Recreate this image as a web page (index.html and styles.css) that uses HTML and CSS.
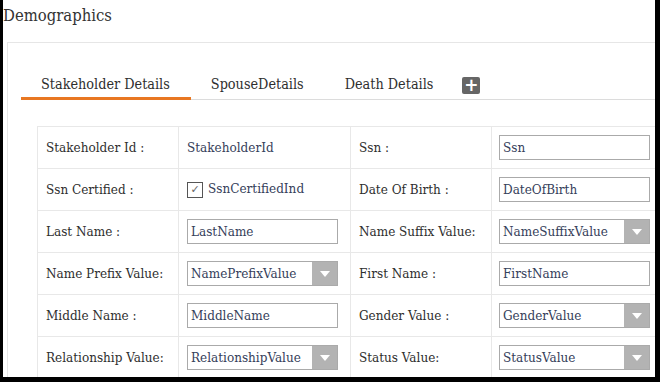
FILE: index.html
```html
<!DOCTYPE html>
<html lang="en">
<head>
    <meta charset="UTF-8">
    <title>Demographics</title>
    <link rel="stylesheet" href="styles.css">
</head>
<body>
    <div class="page">
        <h1 class="title">Demographics</h1>
        <div class="panel">
            <ul class="tabs">
                <li class="tab active">Stakeholder Details</li>
                <li class="tab">SpouseDetails</li>
                <li class="tab">Death Details</li>
                <li class="tab-add"><span class="plus">+</span></li>
            </ul>
            <table class="details">
                <tr>
                    <td class="lbl">Stakeholder Id :</td>
                    <td class="val"><span class="plain">StakeholderId</span></td>
                    <td class="lbl">Ssn :</td>
                    <td class="val"><div class="field">Ssn</div></td>
                </tr>
                <tr>
                    <td class="lbl">Ssn Certified :</td>
                    <td class="val"><span class="check">&#10003;</span><span class="plain">SsnCertifiedInd</span></td>
                    <td class="lbl">Date Of Birth :</td>
                    <td class="val"><div class="field">DateOfBirth</div></td>
                </tr>
                <tr>
                    <td class="lbl">Last Name :</td>
                    <td class="val"><div class="field">LastName</div></td>
                    <td class="lbl">Name Suffix Value:</td>
                    <td class="val"><div class="field select">NameSuffixValue<span class="arrow"></span></div></td>
                </tr>
                <tr>
                    <td class="lbl">Name Prefix Value:</td>
                    <td class="val"><div class="field select">NamePrefixValue<span class="arrow"></span></div></td>
                    <td class="lbl">First Name :</td>
                    <td class="val"><div class="field">FirstName</div></td>
                </tr>
                <tr>
                    <td class="lbl">Middle Name :</td>
                    <td class="val"><div class="field">MiddleName</div></td>
                    <td class="lbl">Gender Value :</td>
                    <td class="val"><div class="field select">GenderValue<span class="arrow"></span></div></td>
                </tr>
                <tr>
                    <td class="lbl">Relationship Value:</td>
                    <td class="val"><div class="field select">RelationshipValue<span class="arrow"></span></div></td>
                    <td class="lbl">Status Value:</td>
                    <td class="val"><div class="field select">StatusValue<span class="arrow"></span></div></td>
                </tr>
            </table>
        </div>
    </div>
</body>
</html>
```

FILE: styles.css
```css
* { box-sizing: border-box; margin: 0; padding: 0; }
body {
    background: #000;
    padding: 0 5px 5px 3px;
    font-family: "DejaVu Serif Condensed", "DejaVu Serif", serif;
    color: #333;
}
.page {
    background: #fff;
    height: 377px;
    overflow: hidden;
}
.title {
    font-size: 16.5px;
    font-weight: 400;
    line-height: 20px;
    padding-top: 6px;
    height: 42px;
    color: #333;
}
.panel {
    margin-left: 4px;
    border-top: 1px solid #e6e6e6;
    border-left: 1px solid #e6e6e6;
    padding: 31px 0 0 13px;
    width: 700px;
}
.tabs {
    list-style: none;
    display: flex;
    align-items: flex-end;
    border-bottom: 1px solid #dcdcdc;
    height: 26px;
}
.tab {
    font-size: 14.3px;
    padding: 0 21px 3px 20px;
    height: 26px;
    line-height: 22px;
    color: #2e2e2e;
}
.tab.active {
    border-bottom: 3px solid #e87722;
    margin-bottom: -1px;
    height: 27px;
}
.tab-add {
    align-self: flex-start;
    margin: 3px 0 0 8px;
}
.plus {
    display: block;
    width: 18px;
    height: 17px;
    background: #666;
    color: #fff;
    border-radius: 2px;
    font-family: "DejaVu Sans", sans-serif;
    font-weight: 700;
    font-size: 17px;
    line-height: 17px;
    text-align: center;
}
.details {
    margin: 26px 0 0 16px;
    border-collapse: collapse;
    font-size: 13.4px;
}
.details td {
    border: 1px solid #e8e8e8;
    height: 42px;
    vertical-align: middle;
}
.lbl {
    width: 141px;
    padding-left: 8px;
    color: #2e2e2e;
}
.val {
    width: 172px;
    padding-left: 8px;
}
.details tr td:last-child { padding-left: 7px; }
.plain { color: #35405a; }
.field {
    width: 151px;
    height: 25px;
    border: 1px solid #aaa;
    padding-left: 3px;
    line-height: 23px;
    color: #35405a;
    position: relative;
}
.arrow {
    position: absolute;
    top: 0;
    right: 0;
    width: 25px;
    height: 23px;
    background: #b3b3b3;
}
.arrow::after {
    content: "";
    position: absolute;
    left: 8px;
    top: 9px;
    border-left: 5px solid transparent;
    border-right: 5px solid transparent;
    border-top: 6px solid #fff;
}
.check {
    display: inline-block;
    width: 16px;
    height: 16px;
    border: 1px solid #555;
    font-family: "DejaVu Sans", sans-serif;
    font-size: 11px;
    line-height: 14px;
    text-align: center;
    color: #666;
    margin-right: 5px;
    vertical-align: middle;
}
```
